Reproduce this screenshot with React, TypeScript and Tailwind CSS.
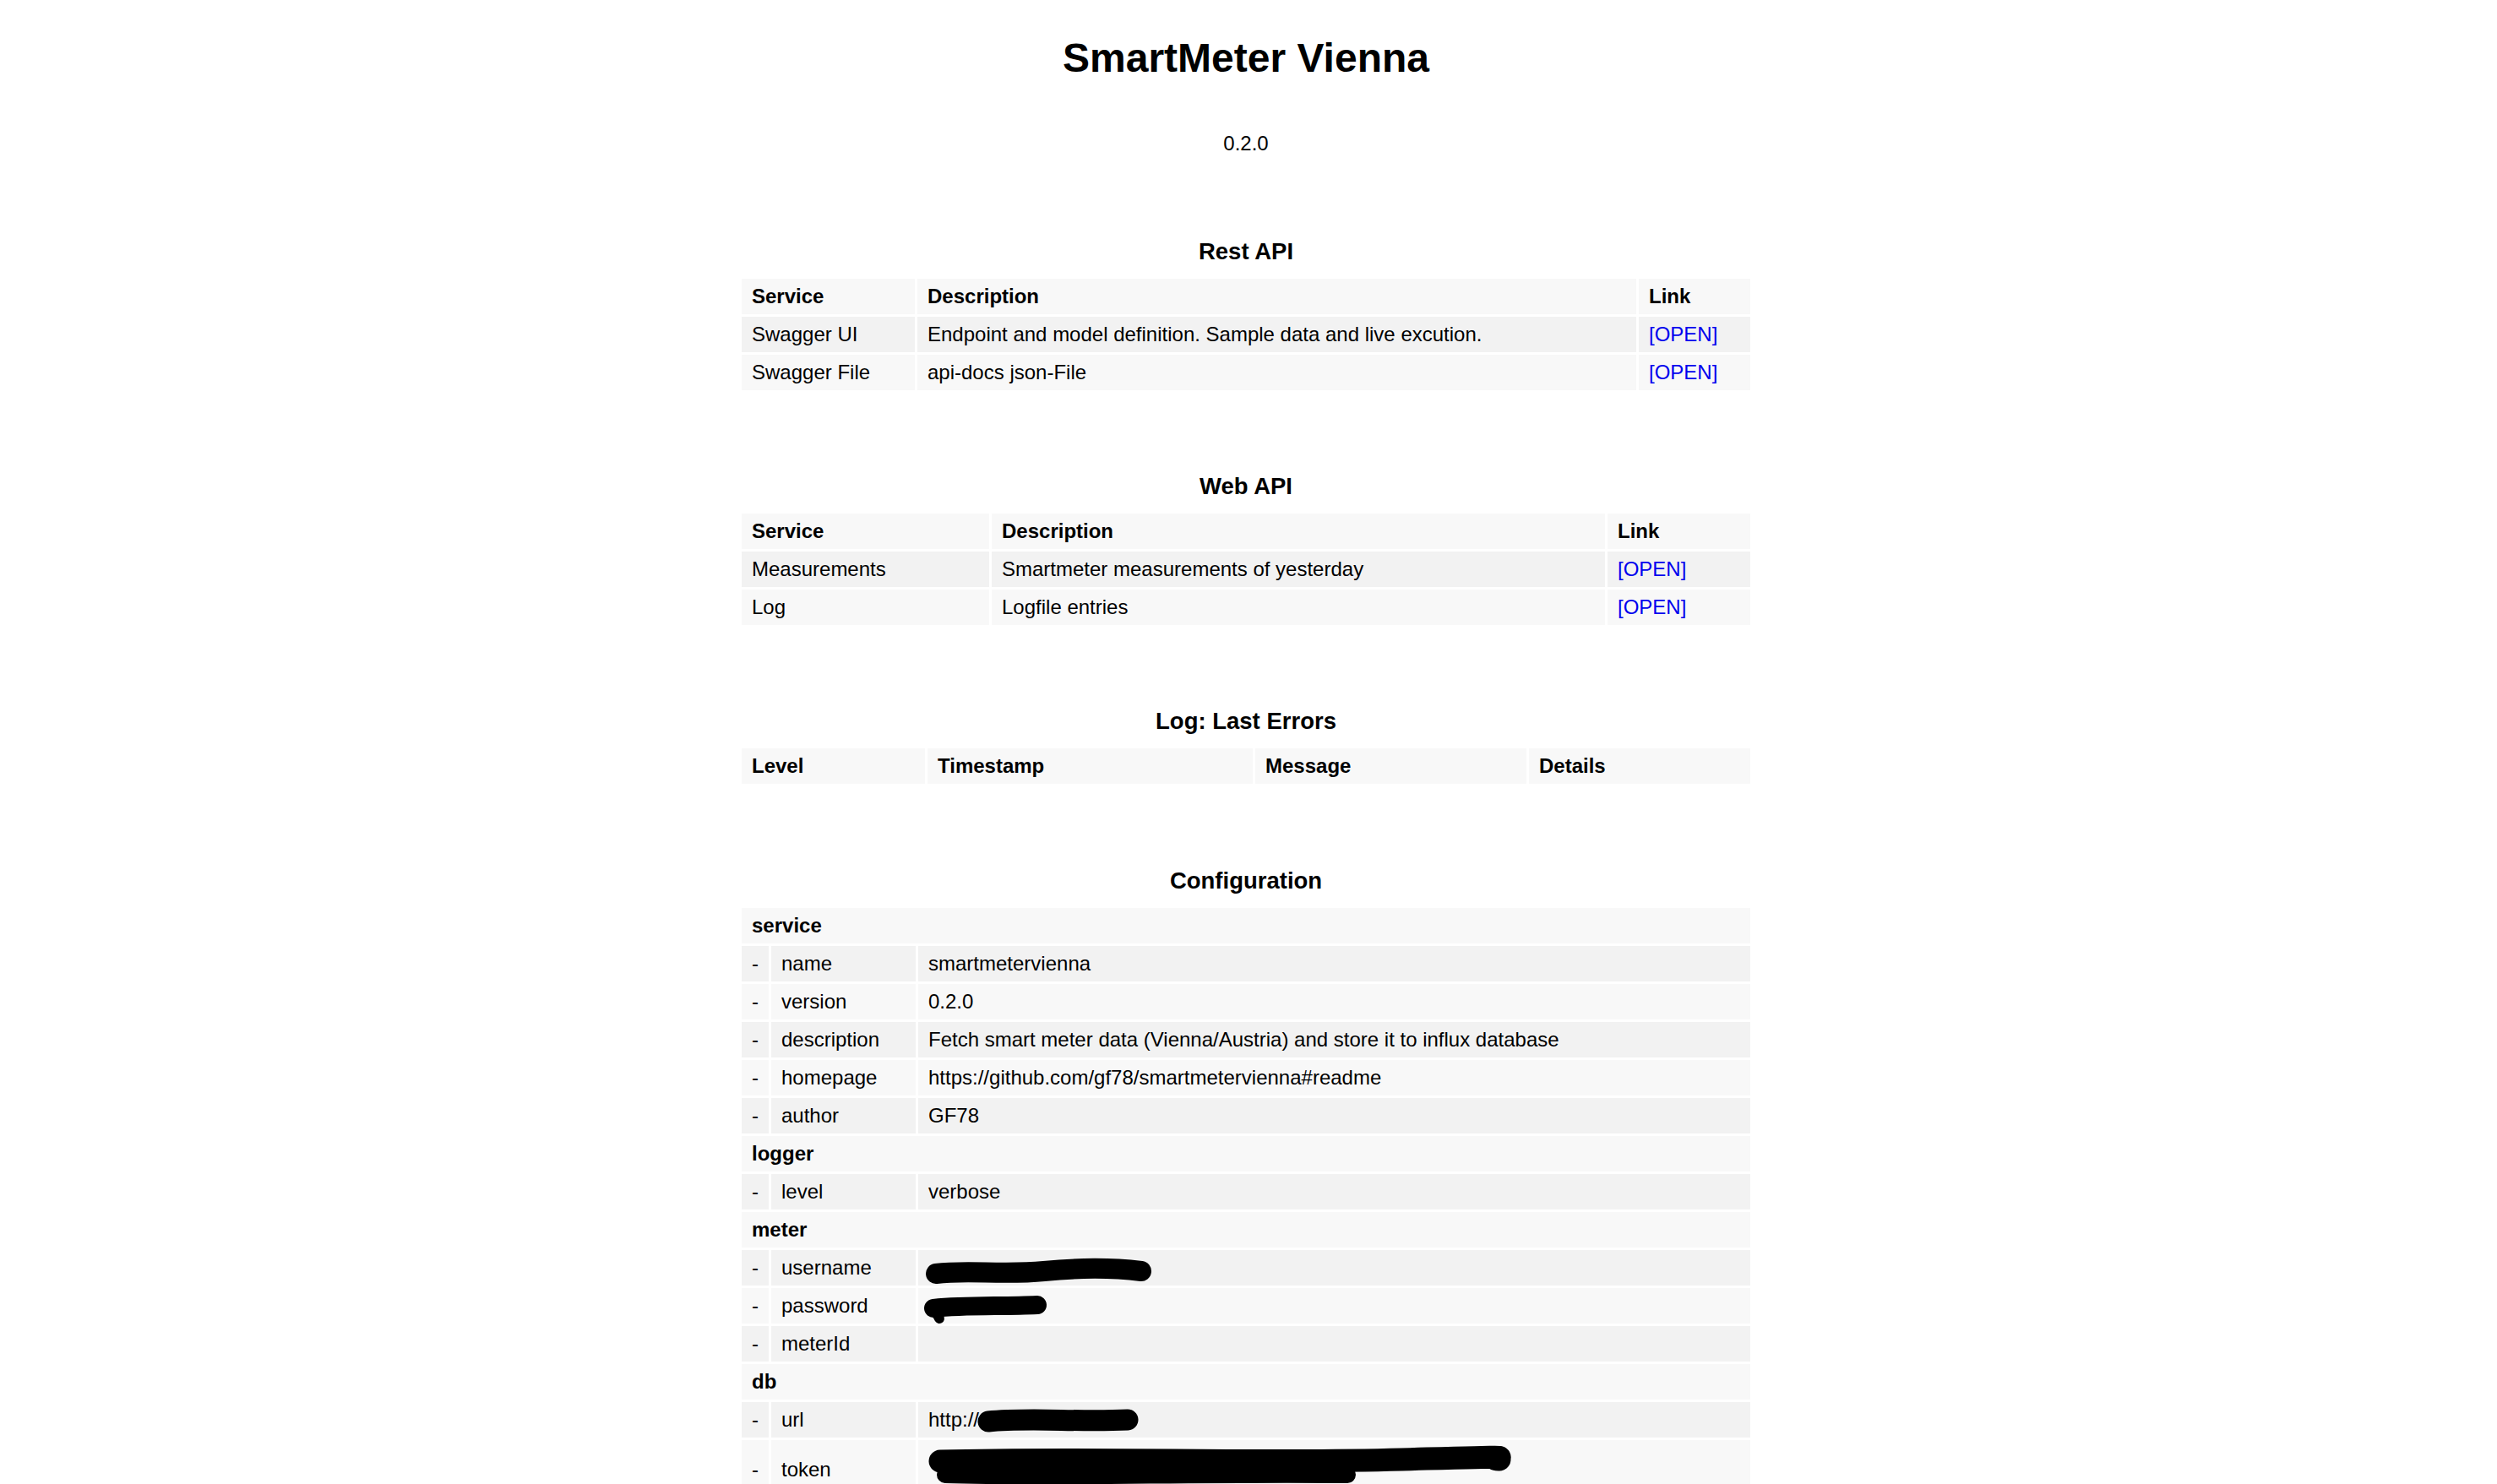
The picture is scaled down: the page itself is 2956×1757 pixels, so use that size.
import React from "react";

const th = "bg-[#f8f8f8] text-left font-bold px-[12px] py-[7px] leading-[28px] align-middle";
const tdA = "bg-[#f2f2f2] px-[12px] py-[7px] leading-[28px] align-middle";
const tdB = "bg-[#f8f8f8] px-[12px] py-[7px] leading-[28px] align-middle";

function Heading({ children }: { children: React.ReactNode }) {
  return <h2 className="text-center text-[27.5px] leading-[30px] font-bold">{children}</h2>;
}

function Blob({ w, h, paths }: { w: number; h: number; paths: { d: string; sw: number }[] }) {
  return (
    <svg width={w} height={h} className="inline-block align-top overflow-visible" viewBox={`0 0 ${w} ${h}`}>
      {paths.map((p, i) => (
        <path key={i} d={p.d} stroke="#000" strokeWidth={p.sw} strokeLinecap="round" strokeLinejoin="round" fill="none" />
      ))}
    </svg>
  );
}

type Cfg = { kind: "group"; label: string } | { kind: "item"; key: string; value: React.ReactNode };

export default function App() {
  const rest = [
    ["Swagger UI", "Endpoint and model definition. Sample data and live excution."],
    ["Swagger File", "api-docs json-File"],
  ];
  const web = [
    ["Measurements", "Smartmeter measurements of yesterday"],
    ["Log", "Logfile entries"],
  ];

  const cfg: Cfg[] = [
    { kind: "group", label: "service" },
    { kind: "item", key: "name", value: "smartmetervienna" },
    { kind: "item", key: "version", value: "0.2.0" },
    { kind: "item", key: "description", value: "Fetch smart meter data (Vienna/Austria) and store it to influx database" },
    { kind: "item", key: "homepage", value: "https://github.com/gf78/smartmetervienna#readme" },
    { kind: "item", key: "author", value: "GF78" },
    { kind: "group", label: "logger" },
    { kind: "item", key: "level", value: "verbose" },
    { kind: "group", label: "meter" },
    {
      kind: "item",
      key: "username",
      value: (
        <span className="block h-[28px] -ml-[3px]">
          <Blob w={270} h={28} paths={[{ d: "M 12 21 C 50 16, 90 23, 140 18 S 230 15, 255 18", sw: 24 }]} />
        </span>
      ),
    },
    {
      kind: "item",
      key: "password",
      value: (
        <span className="block h-[28px] -ml-[5px]">
          <Blob
            w={150}
            h={28}
            paths={[
              { d: "M 11 17 C 50 13, 90 15, 134 13", sw: 22 },
              { d: "M 12 18 L 18 29", sw: 12 },
            ]}
          />
        </span>
      ),
    },
    { kind: "item", key: "meterId", value: "" },
    { kind: "group", label: "db" },
    {
      kind: "item",
      key: "url",
      value: (
        <span className="block h-[28px] whitespace-nowrap">
          http://
          <span className="inline-block -ml-[2px] align-top">
            <Blob w={192} h={28} paths={[{ d: "M 13 16 C 60 11, 120 17, 178 14", sw: 25 }]} />
          </span>
        </span>
      ),
    },
    {
      kind: "item",
      key: "token",
      value: (
        <span className="block h-[56px]">
          <Blob
            w={700}
            h={56}
            paths={[
              { d: "M 14 18 C 200 13, 380 21, 560 16 S 650 14, 676 16", sw: 27 },
              { d: "M 20 34 C 150 38, 320 32, 496 34", sw: 20 },
            ]}
          />
        </span>
      ),
    },
  ];

  return (
    <div className="min-h-screen bg-white text-black pr-[6px] font-['Liberation_Sans',Arial,sans-serif] text-[24px]">
      <div className="mx-auto w-[1200px] pt-[41px] pb-[40px]">
        <h1 className="text-center text-[48px] leading-[55px] font-bold">SmartMeter Vienna</h1>
        <p className="mt-[60px] text-center leading-[28px]">0.2.0</p>

        <section className="mt-[99px]">
          <Heading>Rest API</Heading>
          <table className="mt-[14px] w-[1200px] table-fixed border-separate border-spacing-[3px]">
            <colgroup>
              <col className="w-[205px]" />
              <col className="w-[851px]" />
              <col className="w-[132px]" />
            </colgroup>
            <thead>
              <tr>
                <th className={th}>Service</th>
                <th className={th}>Description</th>
                <th className={th}>Link</th>
              </tr>
            </thead>
            <tbody>
              {rest.map((r, i) => (
                <tr key={r[0]}>
                  <td className={i % 2 === 0 ? tdA : tdB}>{r[0]}</td>
                  <td className={i % 2 === 0 ? tdA : tdB}>{r[1]}</td>
                  <td className={i % 2 === 0 ? tdA : tdB}>
                    <a href="#" className="text-[#0000ee]">[OPEN]</a>
                  </td>
                </tr>
              ))}
            </tbody>
          </table>
        </section>

        <section className="mt-[96px]">
          <Heading>Web API</Heading>
          <table className="mt-[14px] w-[1200px] table-fixed border-separate border-spacing-[3px]">
            <colgroup>
              <col className="w-[293px]" />
              <col className="w-[726px]" />
              <col className="w-[169px]" />
            </colgroup>
            <thead>
              <tr>
                <th className={th}>Service</th>
                <th className={th}>Description</th>
                <th className={th}>Link</th>
              </tr>
            </thead>
            <tbody>
              {web.map((r, i) => (
                <tr key={r[0]}>
                  <td className={i % 2 === 0 ? tdA : tdB}>{r[0]}</td>
                  <td className={i % 2 === 0 ? tdA : tdB}>{r[1]}</td>
                  <td className={i % 2 === 0 ? tdA : tdB}>
                    <a href="#" className="text-[#0000ee]">[OPEN]</a>
                  </td>
                </tr>
              ))}
            </tbody>
          </table>
        </section>

        <section className="mt-[96px]">
          <Heading>Log: Last Errors</Heading>
          <table className="mt-[14px] w-[1200px] table-fixed border-separate border-spacing-[3px]">
            <colgroup>
              <col className="w-[217px]" />
              <col className="w-[385px]" />
              <col className="w-[321px]" />
              <col className="w-[262px]" />
            </colgroup>
            <thead>
              <tr>
                <th className={th}>Level</th>
                <th className={th}>Timestamp</th>
                <th className={th}>Message</th>
                <th className={th}>Details</th>
              </tr>
            </thead>
          </table>
        </section>

        <section className="mt-[97px]">
          <Heading>Configuration</Heading>
          <table className="mt-[14px] w-[1200px] table-fixed border-separate border-spacing-[3px]">
            <colgroup>
              <col className="w-[32px]" />
              <col className="w-[171px]" />
              <col className="w-[985px]" />
            </colgroup>
            <tbody>
              {cfg.map((row, i) => {
                const bg = i % 2 === 0 ? tdB : tdA;
                if (row.kind === "group") {
                  return (
                    <tr key={row.label}>
                      <th colSpan={3} className={th}>
                        {row.label}
                      </th>
                    </tr>
                  );
                }
                return (
                  <tr key={row.key}>
                    <td className={bg}>-</td>
                    <td className={bg}>{row.key}</td>
                    <td className={bg}>{row.value === "" ? <span className="block h-[28px]" /> : row.value}</td>
                  </tr>
                );
              })}
            </tbody>
          </table>
        </section>
      </div>
    </div>
  );
}
